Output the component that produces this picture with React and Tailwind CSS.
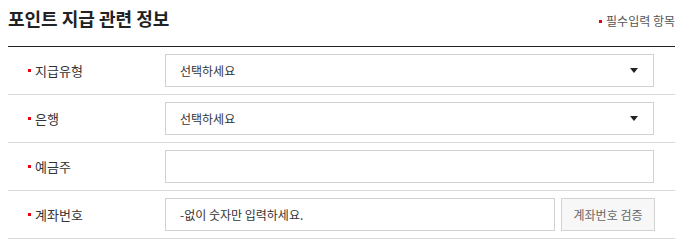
import React from "react";

const font = { fontFamily: '"Noto Sans CJK KR", "Noto Sans", sans-serif' };

const Dot = () => (
  <span className="inline-block w-[3px] h-[3px] bg-[#e60012] mr-[4px] align-middle" />
);

const Label = ({ children }) => (
  <div className="w-[157px] pl-[20px] flex items-center text-[13px] text-[#333]">
    <Dot />
    {children}
  </div>
);

const SelectBox = () => (
  <div className="w-[489px] h-[33px] border border-[#d2d2d2] flex items-center justify-between pl-[14px] pr-[15px] text-[12px] text-[#333]">
    <span>선택하세요</span>
    <svg width="8" height="5" viewBox="0 0 8 5">
      <path d="M0 0H8L4 5Z" fill="#222" />
    </svg>
  </div>
);

const Row = ({ label, children }) => (
  <div className="flex items-center h-[48px] border-b border-[#d9d9d9]">
    <Label>{label}</Label>
    {children}
  </div>
);

const App = () => {
  return (
    <div className="w-[692px] h-[248px] bg-white" style={font}>
      <div className="ml-2 w-[667px]">
        <div className="flex justify-between items-start h-[47px] border-b border-[#222]">
          <h2 className="mt-[5px] text-[18px] leading-[26px] font-bold text-[#222]">
            포인트 지급 관련 정보
          </h2>
          <div className="mt-[12px] text-[12px] text-[#555] flex items-center">
            <Dot />
            필수입력 항목
          </div>
        </div>

        <Row label="지급유형">
          <SelectBox />
        </Row>
        <Row label="은행">
          <SelectBox />
        </Row>
        <Row label="예금주">
          <div className="w-[489px] h-[33px] border border-[#d2d2d2]" />
        </Row>
        <Row label="계좌번호">
          <div className="flex gap-[6px]">
            <div className="w-[390px] h-[33px] border border-[#d2d2d2] flex items-center pl-[14px] text-[12px] text-[#333]">
              -없이 숫자만 입력하세요.
            </div>
            <button className="w-[94px] h-[33px] border border-[#d2d2d2] bg-[#f7f7f7] text-[12px] text-[#666]">
              계좌번호 검증
            </button>
          </div>
        </Row>
      </div>
    </div>
  );
};

export default App;
